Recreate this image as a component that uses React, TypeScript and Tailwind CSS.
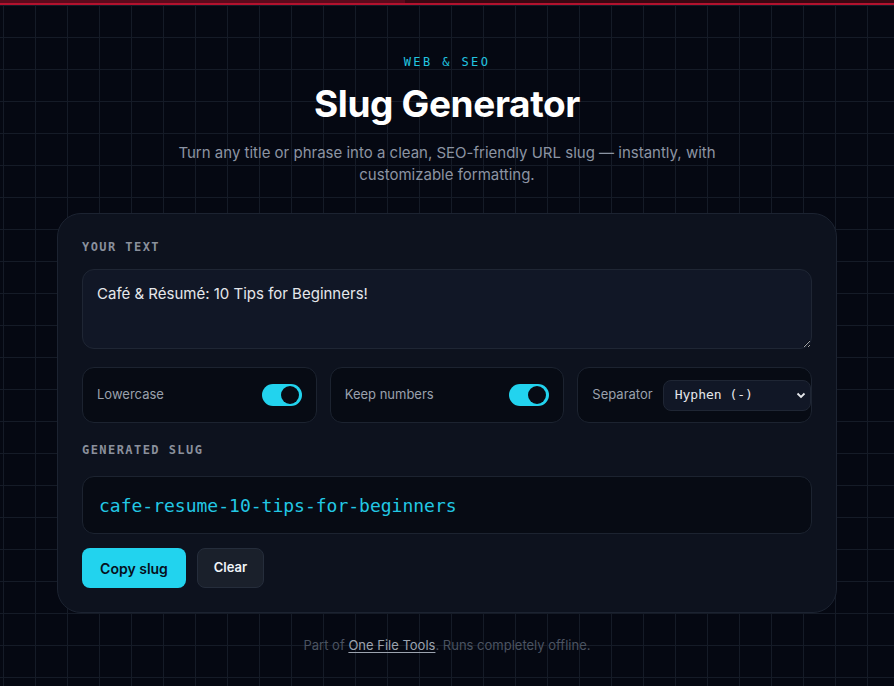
import { useState } from "react";

const mono = "font-['DejaVu_Sans_Mono','Liberation_Mono',monospace]";

type ToggleProps = {
  label: string;
  on: boolean;
  onChange: (v: boolean) => void;
};

const ToggleCard = ({ label, on, onChange }: ToggleProps) => (
  <div className="flex items-center justify-between h-[56px] px-[14px] rounded-xl border border-[#1c2330] bg-[#070b14]">
    <span className="text-[13px] text-[#9aa1ad]">{label}</span>
    <button
      type="button"
      onClick={() => onChange(!on)}
      className={`relative w-10 h-[22px] rounded-full ${on ? "bg-[#22d3ee]" : "bg-[#273041]"}`}
    >
      <span
        className={`absolute top-[2px] w-[18px] h-[18px] rounded-full bg-[#070b14] ${on ? "right-[3px]" : "left-[3px]"}`}
      />
    </button>
  </div>
);

const makeSlug = (text: string, lower: boolean, numbers: boolean, sep: string) => {
  let s = text.normalize("NFD").replace(/[\u0300-\u036f]/g, "");
  if (lower) s = s.toLowerCase();
  if (!numbers) s = s.replace(/[0-9]/g, "");
  return s
    .replace(/[^A-Za-z0-9]+/g, sep)
    .replace(new RegExp(`^\\${sep}+|\\${sep}+$`, "g"), "");
};

export default function App() {
  const [text, setText] = useState("Café & Résumé: 10 Tips for Beginners!");
  const [lower, setLower] = useState(true);
  const [numbers, setNumbers] = useState(true);
  const [sep, setSep] = useState("-");

  const slug = makeSlug(text, lower, numbers, sep);

  return (
    <div className="min-h-screen bg-[#050812] font-['Inter','Noto_Sans',sans-serif]">
      {/* top bar */}
      <div className="h-[5px] bg-[#3a0712] border-b-2 border-[#b3122e]">
        <div className="h-[3px] w-[405px] bg-[#5c0a1c]" />
      </div>

      {/* grid background */}
      <div className="min-h-[681px] bg-[linear-gradient(to_right,#151b27_1px,transparent_1px),linear-gradient(to_bottom,#151b27_1px,transparent_1px)] bg-[size:32px_32px] bg-[position:3px_0px]">
        <div className="flex flex-col items-center pt-[48px]">
          <p className={`${mono} text-[12px] leading-[18px] tracking-[0.2em] text-[#22c5e0]`}>WEB &amp; SEO</p>
          <h1 className="mt-[9px] text-[37px] leading-[48px] font-bold text-white tracking-[-0.01em]">
            Slug Generator
          </h1>
          <p className="mt-[14px] w-[560px] text-center text-[15px] leading-[22px] text-[#8c94a3]">
            Turn any title or phrase into a clean, SEO-friendly URL slug — instantly, with
            customizable formatting.
          </p>

          {/* main card */}
          <div className="mt-[27px] w-[780px] rounded-3xl border border-[#1c2331] bg-[#0d121e] px-6 pt-[24px] pb-[24px]">
            <label className={`${mono} block text-[12px] font-semibold tracking-[0.12em] text-[#8a909c]`}>
              YOUR TEXT
            </label>
            <textarea
              value={text}
              onChange={(e) => setText(e.target.value)}
              className="mt-[13px] block w-full h-[80px] rounded-xl border border-[#1f2634] bg-[#111726] px-[14px] py-[13px] text-[15px] text-[#e5e7eb] outline-none"
            />

            <div className="mt-[18px] grid grid-cols-3 gap-[13px]">
              <ToggleCard label="Lowercase" on={lower} onChange={setLower} />
              <ToggleCard label="Keep numbers" on={numbers} onChange={setNumbers} />
              <div className="flex items-center gap-[10px] h-[56px] pl-[14px] rounded-xl border border-[#1c2330] bg-[#070b14]">
                <span className="text-[13px] text-[#9aa1ad]">Separator</span>
                <div className="relative flex-1">
                  <select
                    value={sep}
                    onChange={(e) => setSep(e.target.value)}
                    className={`${mono} appearance-none w-full h-[31px] rounded-lg border border-[#1f2634] bg-[#111726] pl-[11px] text-[13px] font-normal text-[#e5e7eb] outline-none`}
                  >
                    <option value="-">Hyphen (-)</option>
                    <option value="_">Underscore (_)</option>
                    <option value=".">Dot (.)</option>
                  </select>
                  <svg
                    className="pointer-events-none absolute right-[5px] top-[11px]"
                    width="10"
                    height="8"
                    viewBox="0 0 10 8"
                    fill="none"
                    stroke="#e5e7eb"
                    strokeWidth="1.8"
                  >
                    <path d="M1.5 2.5 L5 6 L8.5 2.5" />
                  </svg>
                </div>
              </div>
            </div>

            <label className={`${mono} mt-[18px] block text-[12px] font-semibold tracking-[0.12em] text-[#8a909c]`}>
              GENERATED SLUG
            </label>
            <div className="mt-[17px] flex items-center h-[58px] rounded-xl border border-[#1c2330] bg-[#070b14] px-4">
              <span className={`${mono} text-[18px] text-[#22c8e4]`}>{slug}</span>
            </div>

            <div className="mt-[14px] flex gap-[11px]">
              <button
                type="button"
                onClick={() => navigator.clipboard?.writeText(slug)}
                className="h-10 w-[104px] rounded-lg bg-[#22d3ee] text-[14px] font-semibold text-[#06101c]"
              >
                Copy slug
              </button>
              <button
                type="button"
                onClick={() => setText("")}
                className="h-10 w-[67px] rounded-lg border border-[#252d3b] bg-[#1a202b] text-[13px] font-semibold text-[#f1f5f9]"
              >
                Clear
              </button>
            </div>
          </div>

          <p className="mt-[23px] text-[13px] text-[#4b5361]">
            Part of{" "}
            <a href="#" className="text-[#9ca3af] underline underline-offset-2">
              One File Tools
            </a>
            . Runs completely offline.
          </p>
        </div>
      </div>
    </div>
  );
}
